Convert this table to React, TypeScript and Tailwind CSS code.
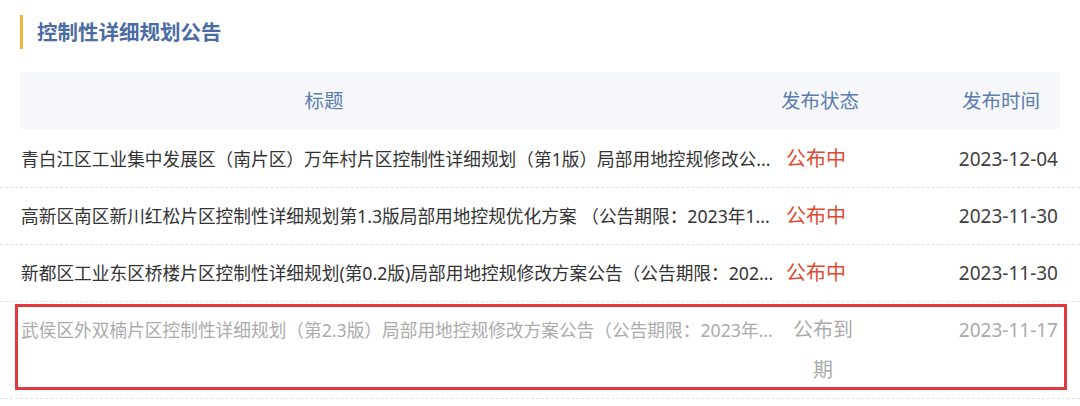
import React from "react";

type Notice = {
  id: number;
  title: string;
  status: string;
  date: string;
  expired?: boolean;
};

const notices: Notice[] = [
  {
    id: 1,
    title:
      "青白江区工业集中发展区（南片区）万年村片区控制性详细规划（第1版）局部用地控规修改公...",
    status: "公布中",
    date: "2023-12-04",
  },
  {
    id: 2,
    title:
      "高新区南区新川红松片区控制性详细规划第1.3版局部用地控规优化方案 （公告期限：2023年1...",
    status: "公布中",
    date: "2023-11-30",
  },
  {
    id: 3,
    title:
      "新都区工业东区桥楼片区控制性详细规划(第0.2版)局部用地控规修改方案公告（公告期限：202...",
    status: "公布中",
    date: "2023-11-30",
  },
  {
    id: 4,
    title:
      "武侯区外双楠片区控制性详细规划（第2.3版）局部用地控规修改方案公告（公告期限：2023年...",
    status: "公布到期",
    date: "2023-11-17",
    expired: true,
  },
];

const font = { fontFamily: '"Noto Sans", "Noto Sans CJK SC", sans-serif' };

const App = () => {
  return (
    <div className="w-[1080px] h-[406px] bg-white overflow-hidden" style={font}>
      {/* section title */}
      <div className="flex items-center h-[34px] mt-[15px] pl-[20px]">
        <div className="w-[3px] h-[34px] bg-[#f2b33d]" />
        <h2 className="ml-[14px] text-[20.5px] font-bold text-[#4a6ba3] leading-none">
          控制性详细规划公告
        </h2>
      </div>

      {/* header */}
      <div className="px-[20px] mt-[23px]">
        <div className="flex items-center h-[57px] bg-[#f5f7fb] text-[19.5px] text-[#5b7cb1]">
          <div className="w-[608px] text-center">标题</div>
          <div className="ml-[142px] w-[100px] text-center">发布状态</div>
          <div className="ml-[80px] w-[102px] text-center">发布时间</div>
        </div>
      </div>

      {/* rows */}
      <div className="mt-[2px]">
        {notices.map((n) => (
          <div
            key={n.id}
            className="relative border-b border-dashed border-[#e3e3e3]"
          >
            <div className="flex items-start px-[20px] py-[8px]">
              <div
                className={`w-[756px] pl-[1px] pr-[4px] whitespace-nowrap overflow-hidden text-[17.7px] leading-[40px] ${
                  n.expired ? "text-[#ababab]" : "text-[#333]"
                }`}
              >
                {n.title}
              </div>
              <div className="w-[96px]">
                {n.expired ? (
                  <div className="ml-[15px] w-[64px] text-center text-[20px] leading-[40px] text-[#ababab]">
                    {n.status}
                  </div>
                ) : (
                  <div className="pl-[10px] text-[20px] leading-[40px] text-[#de4a2f]">
                    {n.status}
                  </div>
                )}
              </div>
              <div
                className={`flex-1 text-right pr-[2px] text-[19px] leading-[40px] ${
                  n.expired ? "text-[#ababab]" : "text-[#404040]"
                }`}
              >
                {n.date}
              </div>
            </div>
            {n.expired && (
              <div className="absolute left-[15px] right-[13px] top-[2px] bottom-[8px] border-[3px] border-[#e4393c] pointer-events-none" />
            )}
          </div>
        ))}
      </div>
    </div>
  );
};

export default App;
